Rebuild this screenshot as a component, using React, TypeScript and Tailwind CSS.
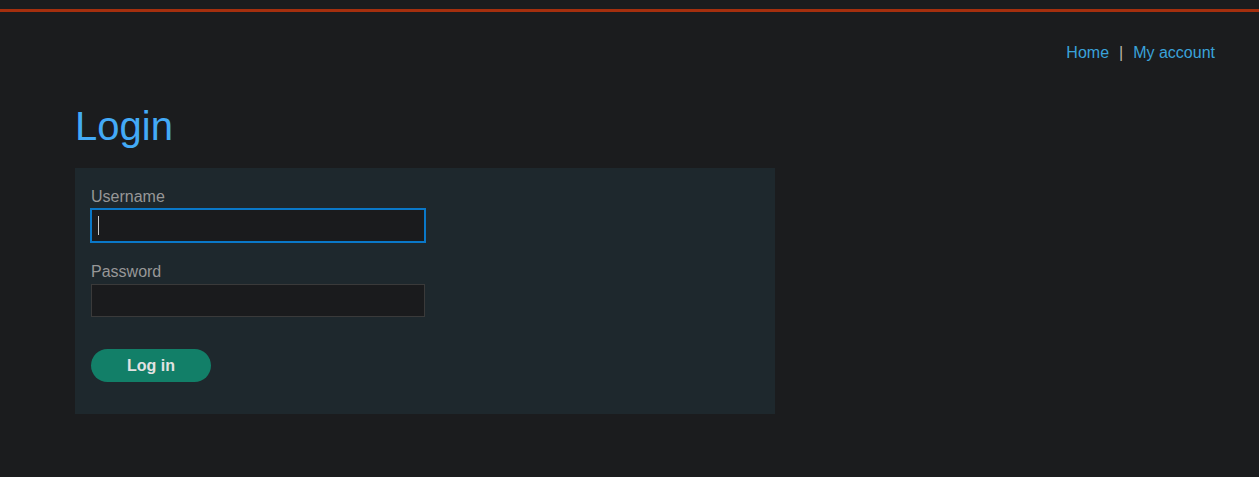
import React from "react";

export default function App() {
  return (
    <div
      className="min-h-[477px] w-full bg-[#1b1c1e]"
      style={{ fontFamily: '"Liberation Sans", Arial, sans-serif' }}
    >
      <div className="h-[9px]" />
      <div className="h-[3px] bg-[#a52f0e]" />
      <nav className="flex justify-end pr-[44px] pt-[32px] text-[16px] leading-[18px]">
        <a href="#" className="text-[#3aa2da]">Home</a>
        <span className="mx-[10px] text-[#bdb5ab]">|</span>
        <a href="#" className="text-[#3aa2da]">My account</a>
      </nav>
      <main className="pl-[75px] pt-[40px]">
        <h1 className="text-[40px] leading-[48px] text-[#43aaf7]">Login</h1>
        <form
          className="mt-[18px] flex w-[700px] flex-col bg-[#1e282d] px-[16px] pb-[32px] pt-[20px]"
          onSubmit={(e) => e.preventDefault()}
        >
          <label className="block text-[16px] leading-[18px] text-[#979797]">Username</label>
          <div className="relative mt-[3px] h-[33px] w-[334px]">
            <input
              className="h-[33px] w-[334px] border border-[#0a78c8] bg-[#1a1b1d] px-[6px] text-[#ddd] caret-transparent shadow-[0_0_0_1px_#0a78c8] outline-none"
            />
            <span className="pointer-events-none absolute left-[7px] top-[7px] h-[19px] w-px bg-[#c8c8c8]" />
          </div>
          <label className="mt-[21px] block text-[16px] leading-[18px] text-[#979797]">Password</label>
          <input
            type="password"
            className="mt-[3px] h-[33px] w-[334px] border border-[#3a3a3a] bg-[#1a1b1d] px-[6px] text-[#ddd] outline-none"
          />
          <button
            type="submit"
            className="mt-[32px] h-[33px] w-[120px] rounded-full bg-[#127f68] text-[16px] font-bold text-[#e2e2e2]"
          >
            Log in
          </button>
        </form>
      </main>
    </div>
  );
}
